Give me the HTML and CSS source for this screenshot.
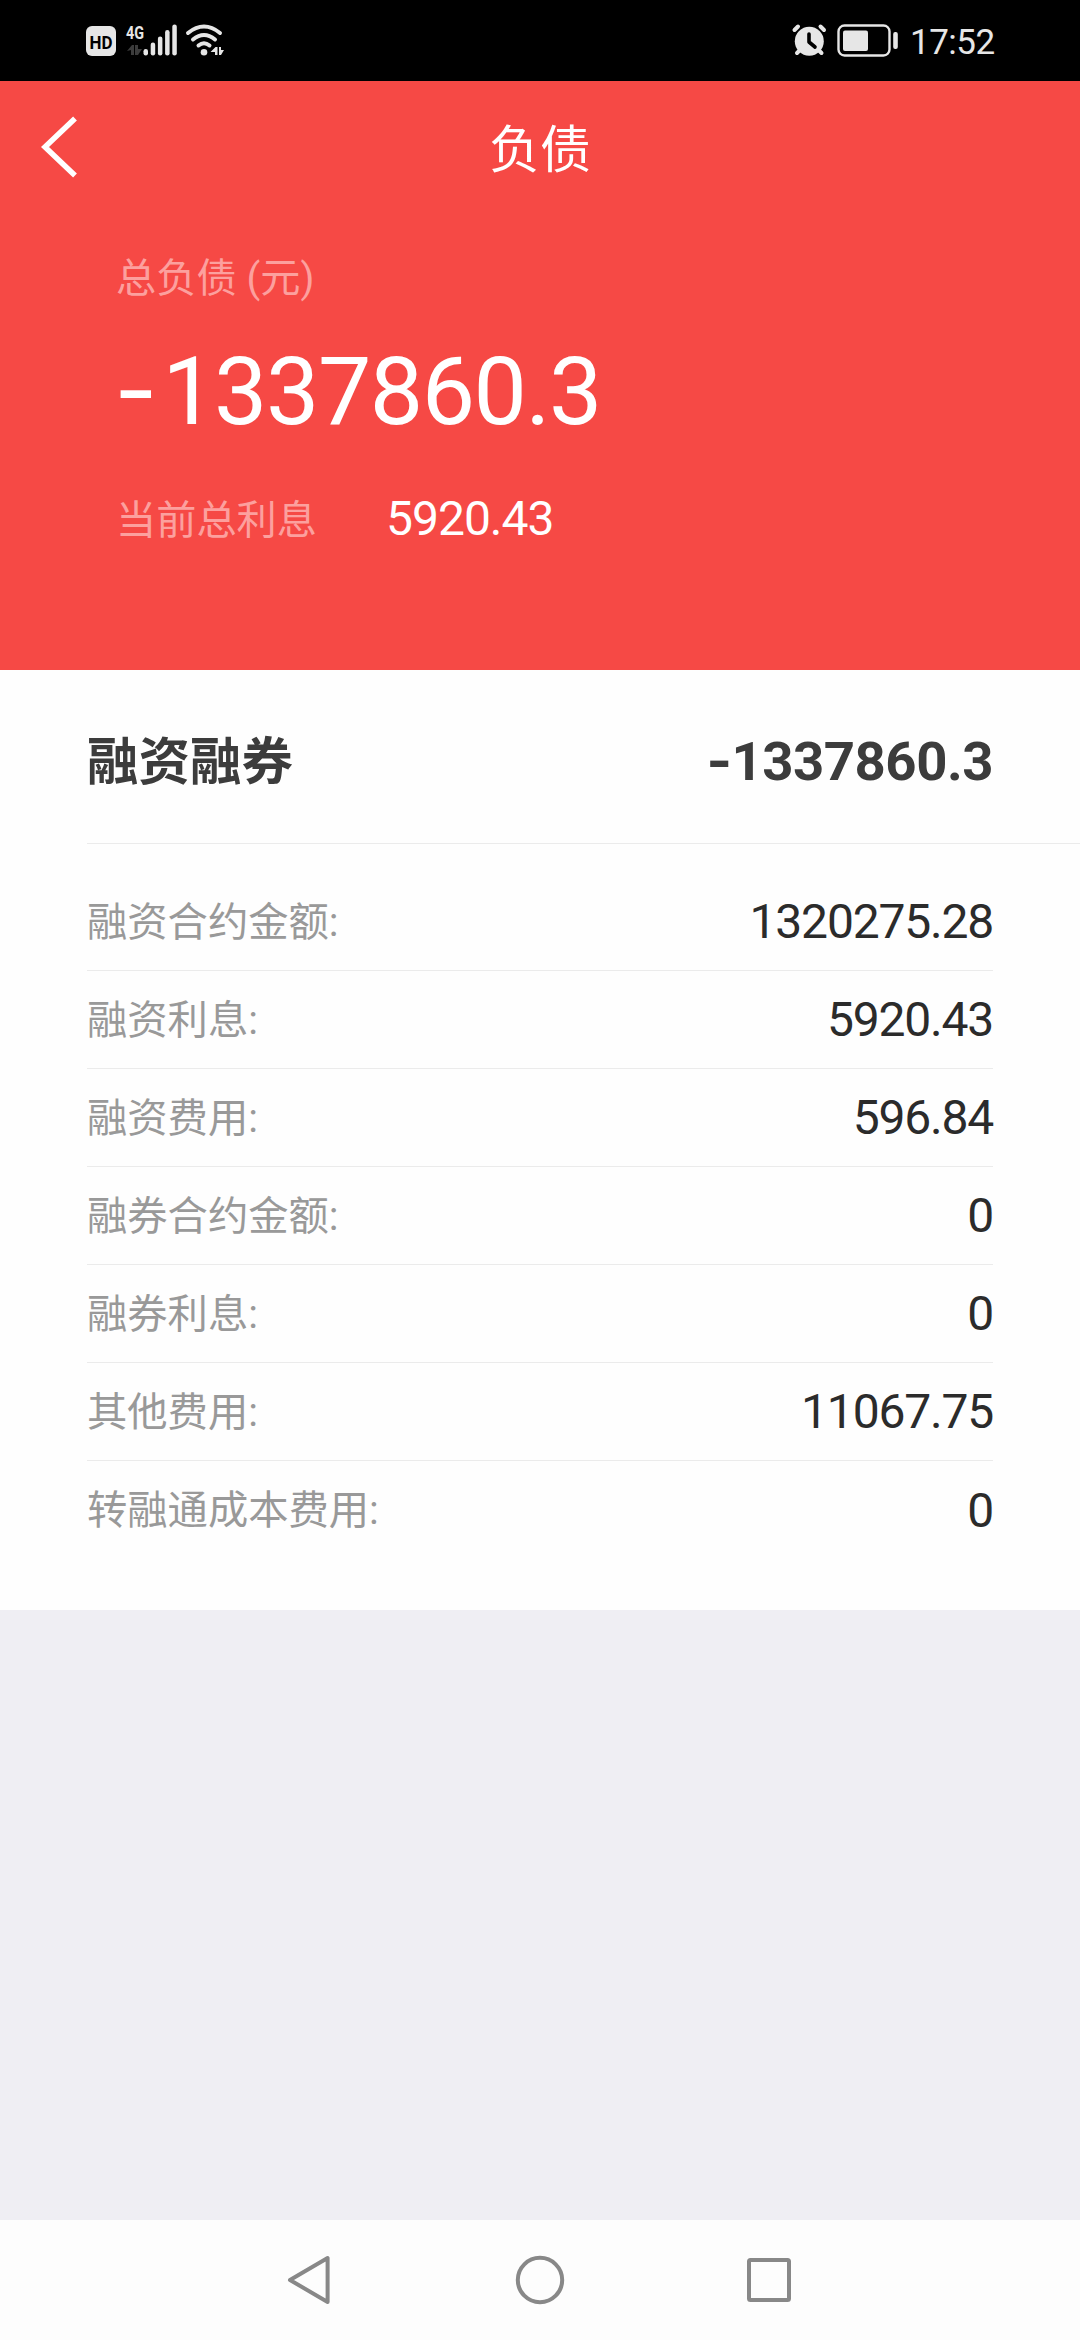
FILE: index.html
```html
<!DOCTYPE html>
<html lang="zh-CN">
<head>
<meta charset="utf-8">
<title>负债</title>
<link rel="stylesheet" href="styles.css">
</head>
<body>
<div class="screen">
  <div class="status">
    <svg class="status-left" width="150" height="81" viewBox="80 0 150 81" fill="#e6e6e6">
      <rect x="86" y="26" width="30" height="30" rx="6"/>
      <text x="101" y="48.500" class="hd" text-anchor="middle" textLength="23" lengthAdjust="spacingAndGlyphs">HD</text>
      <text x="126" y="39" class="net" textLength="18" lengthAdjust="spacingAndGlyphs">4G</text>
      <path fill="#3c3c3c" d="M127 51l5-6h2v10h-3v-5zM135 45h3v4l4 0-4 6h-3z"/>
      <rect x="143.500" y="49" width="4.500" height="6.500" rx="2.200"/>
      <rect x="150.700" y="42.500" width="4.500" height="13" rx="2.200"/>
      <rect x="157.900" y="36.500" width="4.500" height="19" rx="2.200"/>
      <rect x="165.100" y="30" width="4.500" height="25.500" rx="2.200"/>
      <rect x="172.300" y="24.500" width="4.500" height="31" rx="2.200"/>
      <g fill="none" stroke="#e6e6e6" stroke-width="4" stroke-linecap="round">
        <path d="M188 33Q204 20 220 33"/>
        <path d="M193 39.500Q204 30.500 215 39.500"/>
        <path d="M198.500 45.500Q204 41 209.500 45.500"/>
      </g>
      <circle cx="204" cy="52.200" r="3.300"/>
      <path d="M210.500 52l5-5h2v8h-2.500v-3zM219 47h2v3h3l-3 5h-2z"/>
    </svg>
    <div class="status-right">
      <svg width="108" height="81" viewBox="791 0 108 81" fill="#e6e6e6">
        <circle cx="809.300" cy="41.300" r="14.500"/>
        <path fill="none" stroke="#e6e6e6" stroke-width="4" stroke-linecap="round" d="M794.500 30l3.500-3.500M820.500 26.500l3.500 3.500M800 50l-3 3M818.500 50l3 3"/>
        <path fill="none" stroke="#000" stroke-width="3.600" stroke-linecap="round" stroke-linejoin="round" d="M809 34v8l6 5"/>
        <rect x="838.500" y="25.500" width="51" height="30" rx="6" fill="none" stroke="#e6e6e6" stroke-width="2.400"/>
        <rect x="843" y="30.500" width="25" height="20.500" rx="2"/>
        <rect x="893.200" y="32" width="4.600" height="17" rx="2"/>
      </svg>
      <span class="clock">17:52</span>
    </div>
  </div>

  <header class="hero">
    <div class="titlebar">
      <svg class="back" width="40" height="64" viewBox="0 0 40 64"><path d="M37 3.500L7 32l30 28.500" fill="none" stroke="#fff" stroke-width="5.500"/></svg>
      <h1 class="title">负债</h1>
    </div>
    <div class="summary">
      <div class="caption">总负债 (元)</div>
      <div class="total"><span class="minus">-</span>1337860.3</div>
      <div class="interest"><span class="caption">当前总利息</span><span class="interest-value">5920.43</span></div>
    </div>
  </header>

  <main class="card">
    <div class="card-head"><h2 class="card-title">融资融券</h2><span class="card-total"><span class="minus">-</span>1337860.3</span></div>
    <div class="rows">
      <div class="row"><span class="label">融资合约金额:</span><span class="value">1320275.28</span></div>
      <div class="row"><span class="label">融资利息:</span><span class="value">5920.43</span></div>
      <div class="row"><span class="label">融资费用:</span><span class="value">596.84</span></div>
      <div class="row"><span class="label">融券合约金额:</span><span class="value">0</span></div>
      <div class="row"><span class="label">融券利息:</span><span class="value">0</span></div>
      <div class="row"><span class="label">其他费用:</span><span class="value">11067.75</span></div>
      <div class="row"><span class="label">转融通成本费用:</span><span class="value">0</span></div>
    </div>
  </main>

  <nav class="nav">
    <svg width="60" height="60" viewBox="0 0 60 60"><path d="M46.600 8v44L9 30z"/></svg>
    <svg width="60" height="60" viewBox="0 0 60 60"><circle cx="30" cy="30" r="22.200"/></svg>
    <svg width="60" height="60" viewBox="0 0 60 60"><rect x="10" y="10" width="40" height="40" rx="1.500"/></svg>
  </nav>
</div>
</body>
</html>
```

FILE: styles.css
```css
* { box-sizing: border-box; }

body {
  margin: 0;
  font-family: Roboto, "Noto Sans CJK SC", sans-serif;
}

.screen {
  display: flex;
  flex-direction: column;
  width: 1080px;
  height: 2340px;
  overflow: hidden;
  background: #efeef3;
}

.status {
  display: flex;
  justify-content: space-between;
  height: 81px;
  padding: 0 86px 0 80px;
  background: #000;
}
.status svg { display: block; }
.hd { font: 700 19px Roboto, sans-serif; fill: #000; }
.net { font: 700 19px Roboto, sans-serif; }
.status-right { display: flex; }
.clock {
  width: 95px;
  padding-left: 11px;
  color: #e6e6e6;
  font-size: 35px;
  line-height: 86px;
  letter-spacing: -0.5px;
  white-space: nowrap;
}

.hero {
  height: 589px;
  background: #f64945;
  color: #fff;
}
.titlebar {
  display: grid;
  grid-template-columns: 120px 1fr 120px;
  align-items: center;
  height: 132px;
}
.back { margin-left: 38px; }
.title {
  margin: 0;
  padding-top: 7px;
  font-size: 51px;
  font-weight: 400;
  line-height: 60px;
  text-align: center;
}
.summary { padding: 36px 116px 0; }
.caption {
  color: #fca09e;
  font-size: 40.200px;
  line-height: 60px;
}
.total {
  height: 165px;
  margin-left: -2px;
  font-size: 95px;
  line-height: 162px;
  letter-spacing: -1.500px;
  white-space: nowrap;
}
.minus { font-family: Inter, sans-serif; }
.total .minus { margin-right: 6px; }
.interest { display: flex; margin-top: 17px; line-height: 60px; }
.interest-value {
  margin-top: -2px;
  margin-left: 69px;
  font-size: 48px;
  letter-spacing: -1px;
}

.card {
  height: 940px;
  padding-left: 87px;
  background: #fefefe;
}
.card-head {
  display: flex;
  align-items: center;
  justify-content: space-between;
  height: 174px;
  padding: 6px 87px 0 0;
  border-bottom: 1px solid #ebebeb;
  color: #3c3c3c;
}
.card-title {
  margin: 0;
  padding-bottom: 4px;
  font-size: 51.500px;
  font-weight: 700;
}
.card-total {
  font-size: 54.500px;
  font-weight: 700;
  letter-spacing: -0.500px;
}
.rows { padding: 29px 87px 0 0; }
.row {
  display: flex;
  align-items: center;
  justify-content: space-between;
  height: 98px;
  border-bottom: 1px solid #ebebeb;
}
.row:last-child { border-bottom: 0; }
.label { padding-bottom: 7px; color: #999; font-size: 40.300px; }
.value { color: #2b2b2b; font-size: 48px; letter-spacing: -1.200px; }

.nav {
  display: flex;
  align-items: center;
  justify-content: center;
  gap: 169px;
  height: 120px;
  margin-top: auto;
  background: #fdfdfd;
}
.nav svg { fill: none; stroke: #888; stroke-width: 4; stroke-linejoin: round; }
```
